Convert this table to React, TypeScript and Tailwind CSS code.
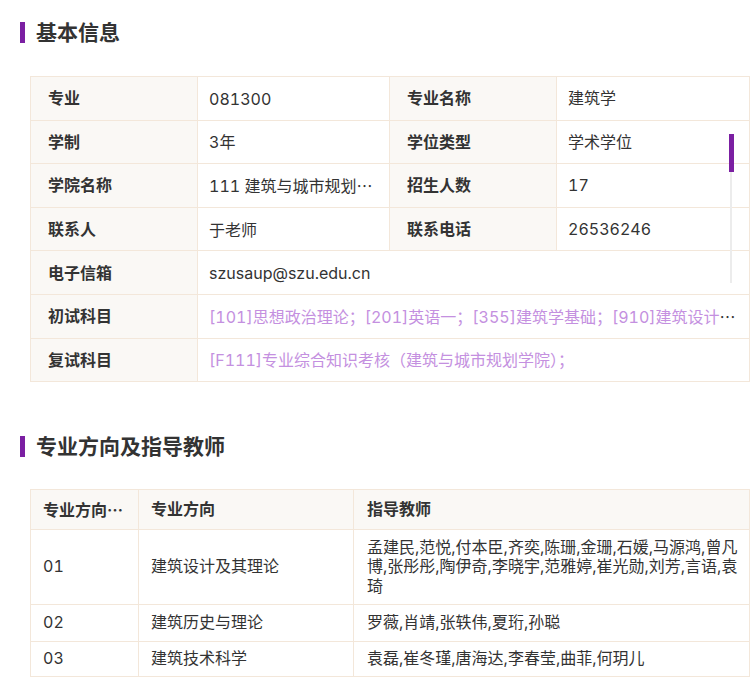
import React from 'react';

const cjk = { fontFamily: '"Noto Sans CJK SC", sans-serif' };
const latin = { fontFamily: 'Inter, "Noto Sans CJK SC", sans-serif' };

const basicRows: { l1: string; v1: React.ReactNode; l2?: string; v2?: string }[] = [
  { l1: '专业', v1: <span style={latin}>081300</span>, l2: '专业名称', v2: '建筑学' },
  { l1: '学制', v1: <span style={latin}>3年</span>, l2: '学位类型', v2: '学术学位' },
  {
    l1: '学院名称',
    v1: (
      <>
        <span style={latin}>111 </span>建筑与城市规划学院
      </>
    ),
    l2: '招生人数',
    v2: '17',
  },
  { l1: '联系人', v1: '于老师', l2: '联系电话', v2: '26536246' },
  { l1: '电子信箱', v1: <span style={latin}>szusaup@szu.edu.cn</span> },
  {
    l1: '初试科目',
    v1: (
      <span className="text-[#c490e0]" style={latin}>
        [101]思想政治理论；[201]英语一；[355]建筑学基础；[910]建筑设计与理论；
      </span>
    ),
  },
  {
    l1: '复试科目',
    v1: (
      <span className="text-[#c490e0]" style={latin}>
        [F111]专业综合知识考核（建筑与城市规划学院）；
      </span>
    ),
  },
];

const directions = [
  {
    code: '01',
    name: '建筑设计及其理论',
    teachers: '孟建民,范悦,付本臣,齐奕,陈珊,金珊,石媛,马源鸿,曾凡博,张彤彤,陶伊奇,李晓宇,范雅婷,崔光勋,刘芳,言语,袁琦',
    h: 'h-[75px]',
  },
  { code: '02', name: '建筑历史与理论', teachers: '罗薇,肖靖,张轶伟,夏珩,孙聪', h: 'h-[37px]' },
  { code: '03', name: '建筑技术科学', teachers: '袁磊,崔冬瑾,唐海达,李春莹,曲菲,何玥儿', h: 'h-[35px]' },
];

export default function App() {
  return (
    <div className="w-[750px] min-h-[694px] bg-white text-[#333] pt-[22px] tabular-nums" style={latin}>
      <SectionTitle title="基本信息" />

      {/* Basic info table */}
      <div className="relative ml-[30px] mt-[33px] w-[719px]">
        <table className="w-full table-fixed border-collapse text-[16px]">
          <colgroup>
            <col className="w-[167px]" />
            <col className="w-[192px]" />
            <col className="w-[167px]" />
            <col className="w-[193px]" />
          </colgroup>
          <tbody>
            {basicRows.map((r) => (
              <tr key={r.l1} className="h-[43.6px]">
                <td className="border border-[#f3e7da] bg-[#faf8f5] pl-[17px] font-bold">{r.l1}</td>
                <td colSpan={r.l2 ? 1 : 3} className="border border-[#f3e7da] pl-[11px] pr-[10px]">
                  <div className="truncate" style={cjk}>
                    {r.v1}
                  </div>
                </td>
                {r.l2 && (
                  <>
                    <td className="border border-[#f3e7da] bg-[#faf8f5] pl-[17px] font-bold">{r.l2}</td>
                    <td className="border border-[#f3e7da] px-[11px]">
                      <div className="truncate">{r.v2}</div>
                    </td>
                  </>
                )}
              </tr>
            ))}
          </tbody>
        </table>

        {/* scroll indicator */}
        <div className="absolute left-[699px] top-[58px] w-[5px] h-[38px] bg-[#7b1fa2]" />
        <div className="absolute left-[700px] top-[96px] w-[2px] h-[111px] bg-[#ececec]" />
      </div>

      <div className="mt-[54px]">
        <SectionTitle title="专业方向及指导教师" />
      </div>

      {/* Directions table */}
      <div className="ml-[30px] mt-[32px] w-[719px]">
        <table className="w-full table-fixed border-collapse text-[16px] leading-[19.5px]">
          <colgroup>
            <col className="w-[108px]" />
            <col className="w-[215px]" />
            <col className="w-[396px]" />
          </colgroup>
          <thead>
            <tr className="h-[40px] bg-[#faf8f5]">
              <th className="border border-[#f3e7da] pl-[12px] pr-[8px] py-0 text-left font-bold">
                <div className="truncate" style={cjk}>
                  专业方向代码
                </div>
              </th>
              <th className="border border-[#f3e7da] px-[12px] py-0 text-left font-bold">专业方向</th>
              <th className="border border-[#f3e7da] pl-[13px] pr-[5px] py-0 text-left font-bold">指导教师</th>
            </tr>
          </thead>
          <tbody>
            {directions.map((d) => (
              <tr key={d.code} className={d.h}>
                <td className="border border-[#f3e7da] pl-[12px] py-0">{d.code}</td>
                <td className="border border-[#f3e7da] px-[12px] py-0">{d.name}</td>
                <td className="border border-[#f3e7da] pl-[13px] pr-[5px] py-0">{d.teachers}</td>
              </tr>
            ))}
          </tbody>
        </table>
      </div>
    </div>
  );
}

function SectionTitle({ title }: { title: string }) {
  return (
    <div className="flex items-center h-[21px] pl-[20px]">
      <div className="w-[5px] h-[21px] bg-[#7b1fa2]" />
      <h2 className="ml-[11px] text-[21px] leading-[21px] font-bold text-[#333]">{title}</h2>
    </div>
  );
}
